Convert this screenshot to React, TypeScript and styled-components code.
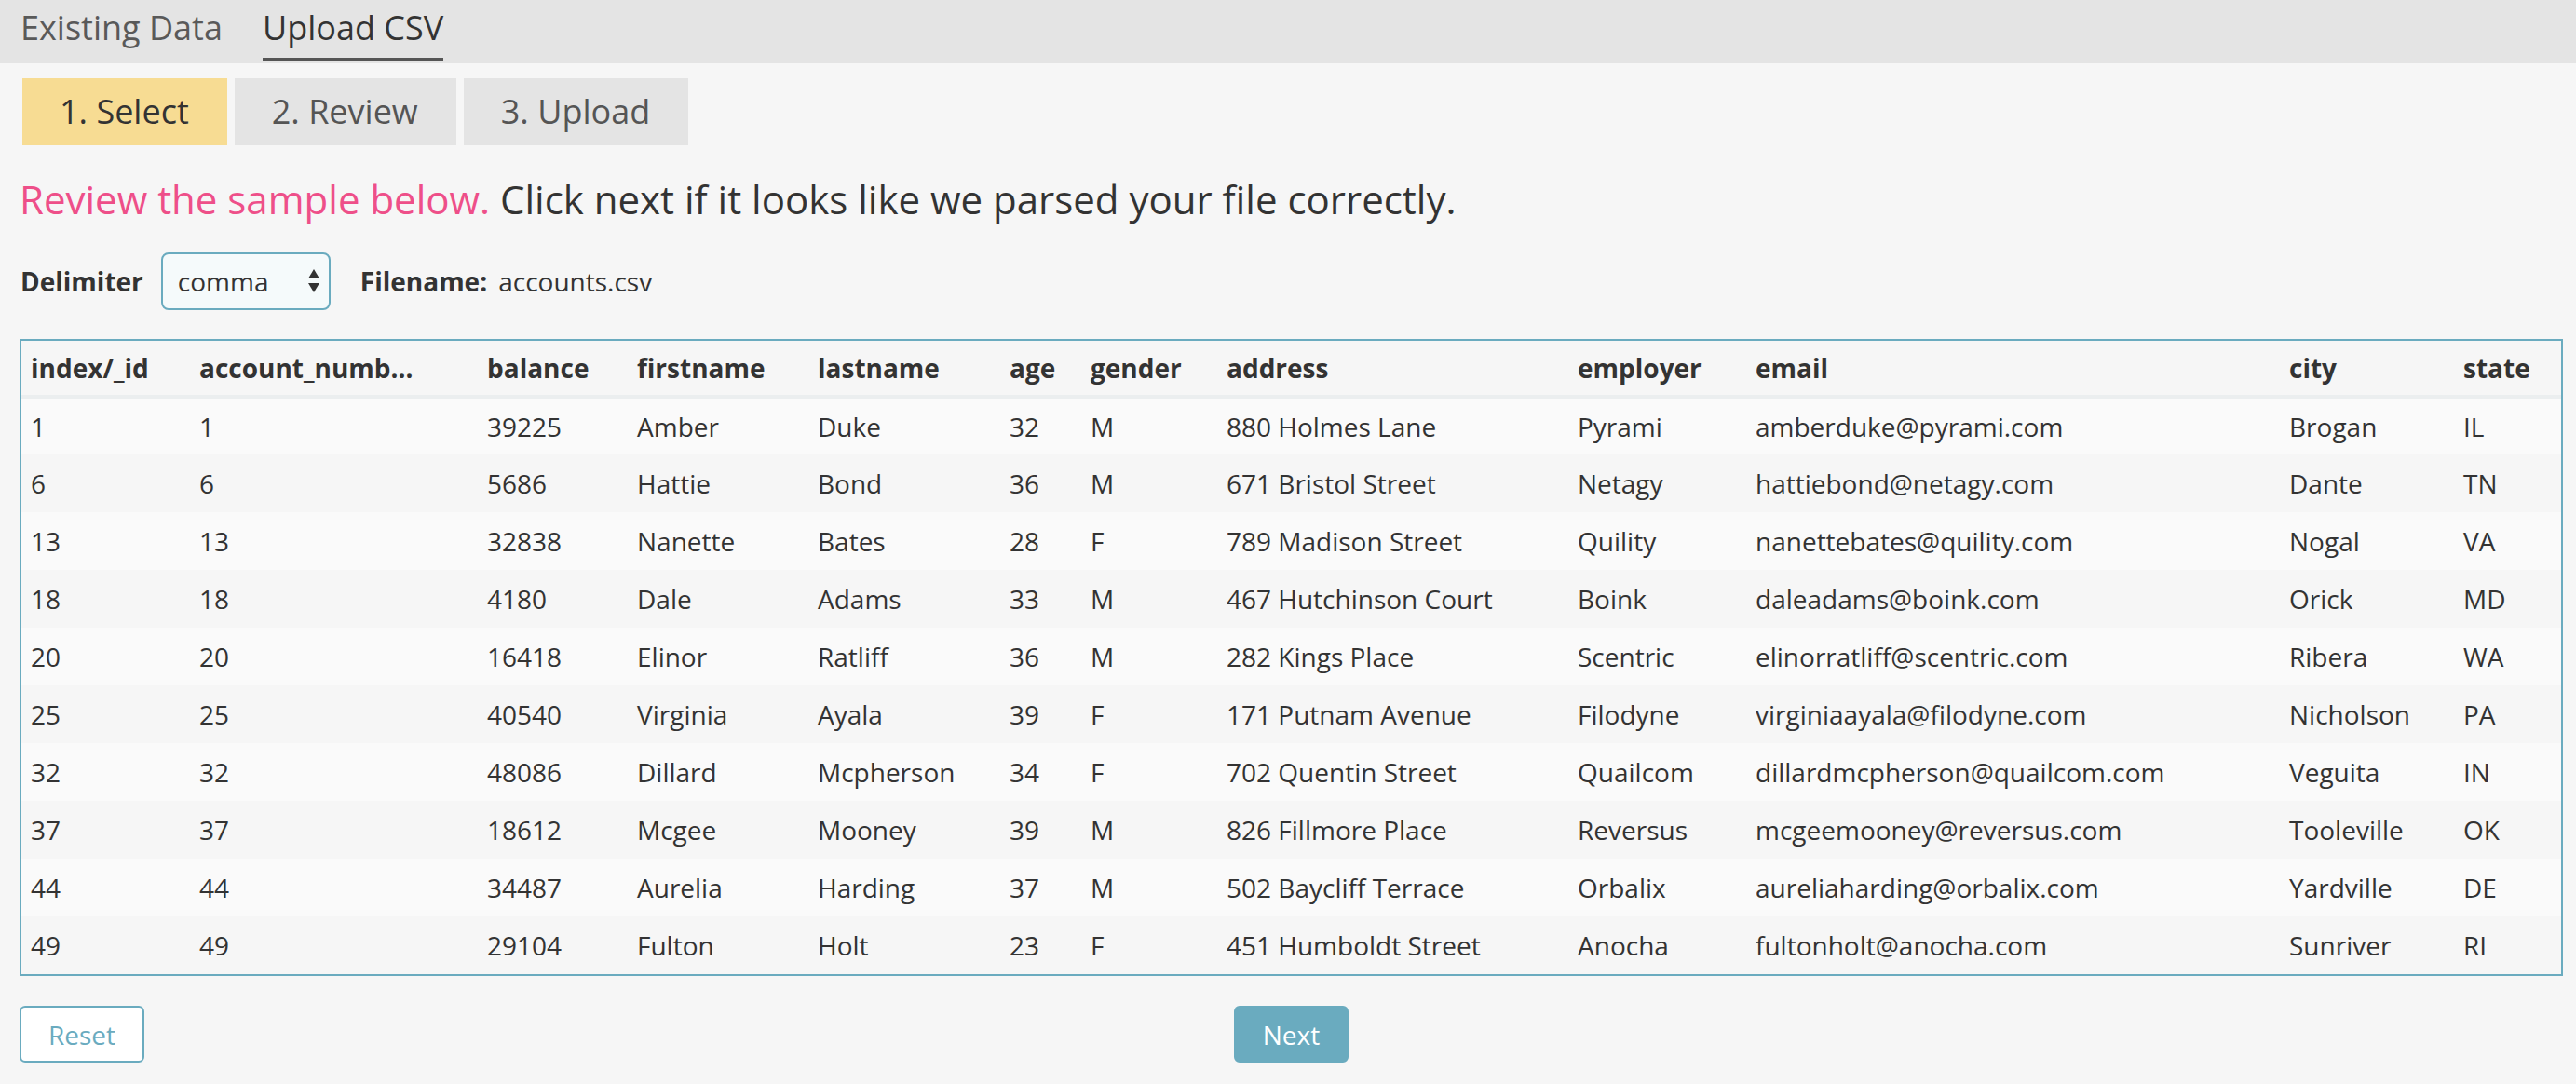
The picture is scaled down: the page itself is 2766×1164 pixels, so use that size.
import React from "react";
import styled, { createGlobalStyle } from "styled-components";

const TEAL = "#6aabbf";
const TEXT = "#333333";

const Global = createGlobalStyle`
  html, body {
    margin: 0;
    padding: 0;
    background: #f6f6f6;
  }
  body {
    font-family: "Open Sans", "Liberation Sans", sans-serif;
    color: ${TEXT};
  }
  * { box-sizing: border-box; }
`;

const Page = styled.div`
  width: 2766px;
  min-height: 1164px;
  background: #f6f6f6;
`;

const TabBar = styled.nav`
  height: 68px;
  background: #e4e4e4;
  display: flex;
  align-items: flex-start;
  gap: 43px;
  padding: 0 0 0 22px;
`;

const Tab = styled.div<{ $active?: boolean }>`
  font-size: 36px;
  line-height: 49px;
  padding-top: 5px;
  padding-bottom: 8px;
  color: ${(p) => (p.$active ? TEXT : "#595959")};
  border-bottom: 4px solid ${(p) => (p.$active ? "#555555" : "transparent")};
`;

const Content = styled.main`
  padding: 16px 14px 0 21px;
  display: flex;
  flex-direction: column;
`;

const Steps = styled.div`
  display: flex;
  gap: 8px;
  padding-left: 3px;
`;

const Step = styled.div<{ $active?: boolean }>`
  height: 72px;
  line-height: 72px;
  padding: 0 41px 0 40px;
  font-size: 36px;
  background: ${(p) => (p.$active ? "#f7dc93" : "#e4e4e4")};
  color: ${(p) => (p.$active ? TEXT : "#555555")};
`;

const Heading = styled.h2`
  margin: 29px 0 0 0;
  font-size: 42px;
  line-height: 57px;
  font-weight: 400;
  color: ${TEXT};
`;

const Pink = styled.span`
  color: #ee4f89;
`;

const OptionsRow = styled.div`
  margin-top: 29px;
  height: 62px;
  display: flex;
  align-items: center;
  padding-left: 1px;
`;

const Label = styled.span`
  font-size: 28px;
  font-weight: 700;
  color: ${TEXT};
`;

const SelectBox = styled.div`
  margin-left: 19px;
  margin-right: 32px;
  width: 182px;
  height: 62px;
  border: 2px solid ${TEAL};
  border-radius: 8px;
  background: #f5fafb;
  display: flex;
  align-items: center;
  justify-content: space-between;
  padding: 0 9px 0 16px;
  font-size: 28px;
  color: ${TEXT};
`;

const Value = styled.span`
  font-size: 28px;
  margin-left: 12px;
  color: ${TEXT};
`;

const TableWrap = styled.div`
  margin-top: 31px;
  border: 2px solid ${TEAL};
`;

const Table = styled.table`
  width: 100%;
  border-collapse: collapse;
  table-layout: fixed;
  font-size: 28px;
  color: ${TEXT};
`;

const HeadCell = styled.th`
  height: 60px;
  padding: 0 0 0 10px;
  text-align: left;
  font-weight: 700;
  white-space: nowrap;
  overflow: hidden;
  background: #f6f6f6;
  border-bottom: 4px solid #ebeeef;
`;

const Row = styled.tr<{ $odd: boolean }>`
  background: ${(p) => (p.$odd ? "#fafafa" : "#f6f6f6")};
  & + & td {
    border-top: 2px solid #ebeeef;
  }
`;

const Cell = styled.td`
  height: 62px;
  padding: 0 0 0 10px;
  white-space: nowrap;
  overflow: hidden;
  font-weight: 400;
`;

const Footer = styled.div`
  margin-top: 32px;
  display: grid;
  grid-template-columns: 1fr auto 1fr;
  align-items: center;
`;

const Button = styled.button<{ $primary?: boolean }>`
  height: 61px;
  padding: 0 29px;
  font-family: "Open Sans", "Liberation Sans", sans-serif;
  font-size: 28px;
  border-radius: 6px;
  border: 2px solid ${TEAL};
  background: ${(p) => (p.$primary ? TEAL : "#ffffff")};
  color: ${(p) => (p.$primary ? "#ffffff" : TEAL)};
  cursor: pointer;
  justify-self: ${(p) => (p.$primary ? "center" : "start")};
`;

const columns = [
  { key: "index/_id", w: 181 },
  { key: "account_numb...", w: 309 },
  { key: "balance", w: 161 },
  { key: "firstname", w: 194 },
  { key: "lastname", w: 206 },
  { key: "age", w: 87 },
  { key: "gender", w: 146 },
  { key: "address", w: 377 },
  { key: "employer", w: 191 },
  { key: "email", w: 573 },
  { key: "city", w: 187 },
  { key: "state", w: 115 },
];

const rows: string[][] = [
  ["1", "1", "39225", "Amber", "Duke", "32", "M", "880 Holmes Lane", "Pyrami", "amberduke@pyrami.com", "Brogan", "IL"],
  ["6", "6", "5686", "Hattie", "Bond", "36", "M", "671 Bristol Street", "Netagy", "hattiebond@netagy.com", "Dante", "TN"],
  ["13", "13", "32838", "Nanette", "Bates", "28", "F", "789 Madison Street", "Quility", "nanettebates@quility.com", "Nogal", "VA"],
  ["18", "18", "4180", "Dale", "Adams", "33", "M", "467 Hutchinson Court", "Boink", "daleadams@boink.com", "Orick", "MD"],
  ["20", "20", "16418", "Elinor", "Ratliff", "36", "M", "282 Kings Place", "Scentric", "elinorratliff@scentric.com", "Ribera", "WA"],
  ["25", "25", "40540", "Virginia", "Ayala", "39", "F", "171 Putnam Avenue", "Filodyne", "virginiaayala@filodyne.com", "Nicholson", "PA"],
  ["32", "32", "48086", "Dillard", "Mcpherson", "34", "F", "702 Quentin Street", "Quailcom", "dillardmcpherson@quailcom.com", "Veguita", "IN"],
  ["37", "37", "18612", "Mcgee", "Mooney", "39", "M", "826 Fillmore Place", "Reversus", "mcgeemooney@reversus.com", "Tooleville", "OK"],
  ["44", "44", "34487", "Aurelia", "Harding", "37", "M", "502 Baycliff Terrace", "Orbalix", "aureliaharding@orbalix.com", "Yardville", "DE"],
  ["49", "49", "29104", "Fulton", "Holt", "23", "F", "451 Humboldt Street", "Anocha", "fultonholt@anocha.com", "Sunriver", "RI"],
];

const SortArrows = () => (
  <svg width="14" height="26" viewBox="0 0 14 26" aria-hidden="true">
    <polygon points="7,0 13,10 1,10" fill="#333" />
    <polygon points="1,15 13,15 7,25" fill="#333" />
  </svg>
);

export default function App() {
  return (
    <Page>
      <Global />
      <TabBar>
        <Tab>Existing Data</Tab>
        <Tab $active>Upload CSV</Tab>
      </TabBar>
      <Content>
        <Steps>
          <Step $active>1. Select</Step>
          <Step>2. Review</Step>
          <Step>3. Upload</Step>
        </Steps>
        <Heading>
          <Pink>Review the sample below.</Pink> Click next if it looks like we parsed your file correctly.
        </Heading>
        <OptionsRow>
          <Label>Delimiter</Label>
          <SelectBox>
            <span>comma</span>
            <SortArrows />
          </SelectBox>
          <Label>Filename:</Label>
          <Value>accounts.csv</Value>
        </OptionsRow>
        <TableWrap>
          <Table>
            <colgroup>
              {columns.map((c) => (
                <col key={c.key} style={{ width: c.w }} />
              ))}
            </colgroup>
            <thead>
              <tr>
                {columns.map((c) => (
                  <HeadCell key={c.key}>{c.key}</HeadCell>
                ))}
              </tr>
            </thead>
            <tbody>
              {rows.map((r, i) => (
                <Row key={i} $odd={i % 2 === 0}>
                  {r.map((v, j) => (
                    <Cell key={j}>{v}</Cell>
                  ))}
                </Row>
              ))}
            </tbody>
          </Table>
        </TableWrap>
        <Footer>
          <Button>Reset</Button>
          <Button $primary>Next</Button>
        </Footer>
      </Content>
    </Page>
  );
}
